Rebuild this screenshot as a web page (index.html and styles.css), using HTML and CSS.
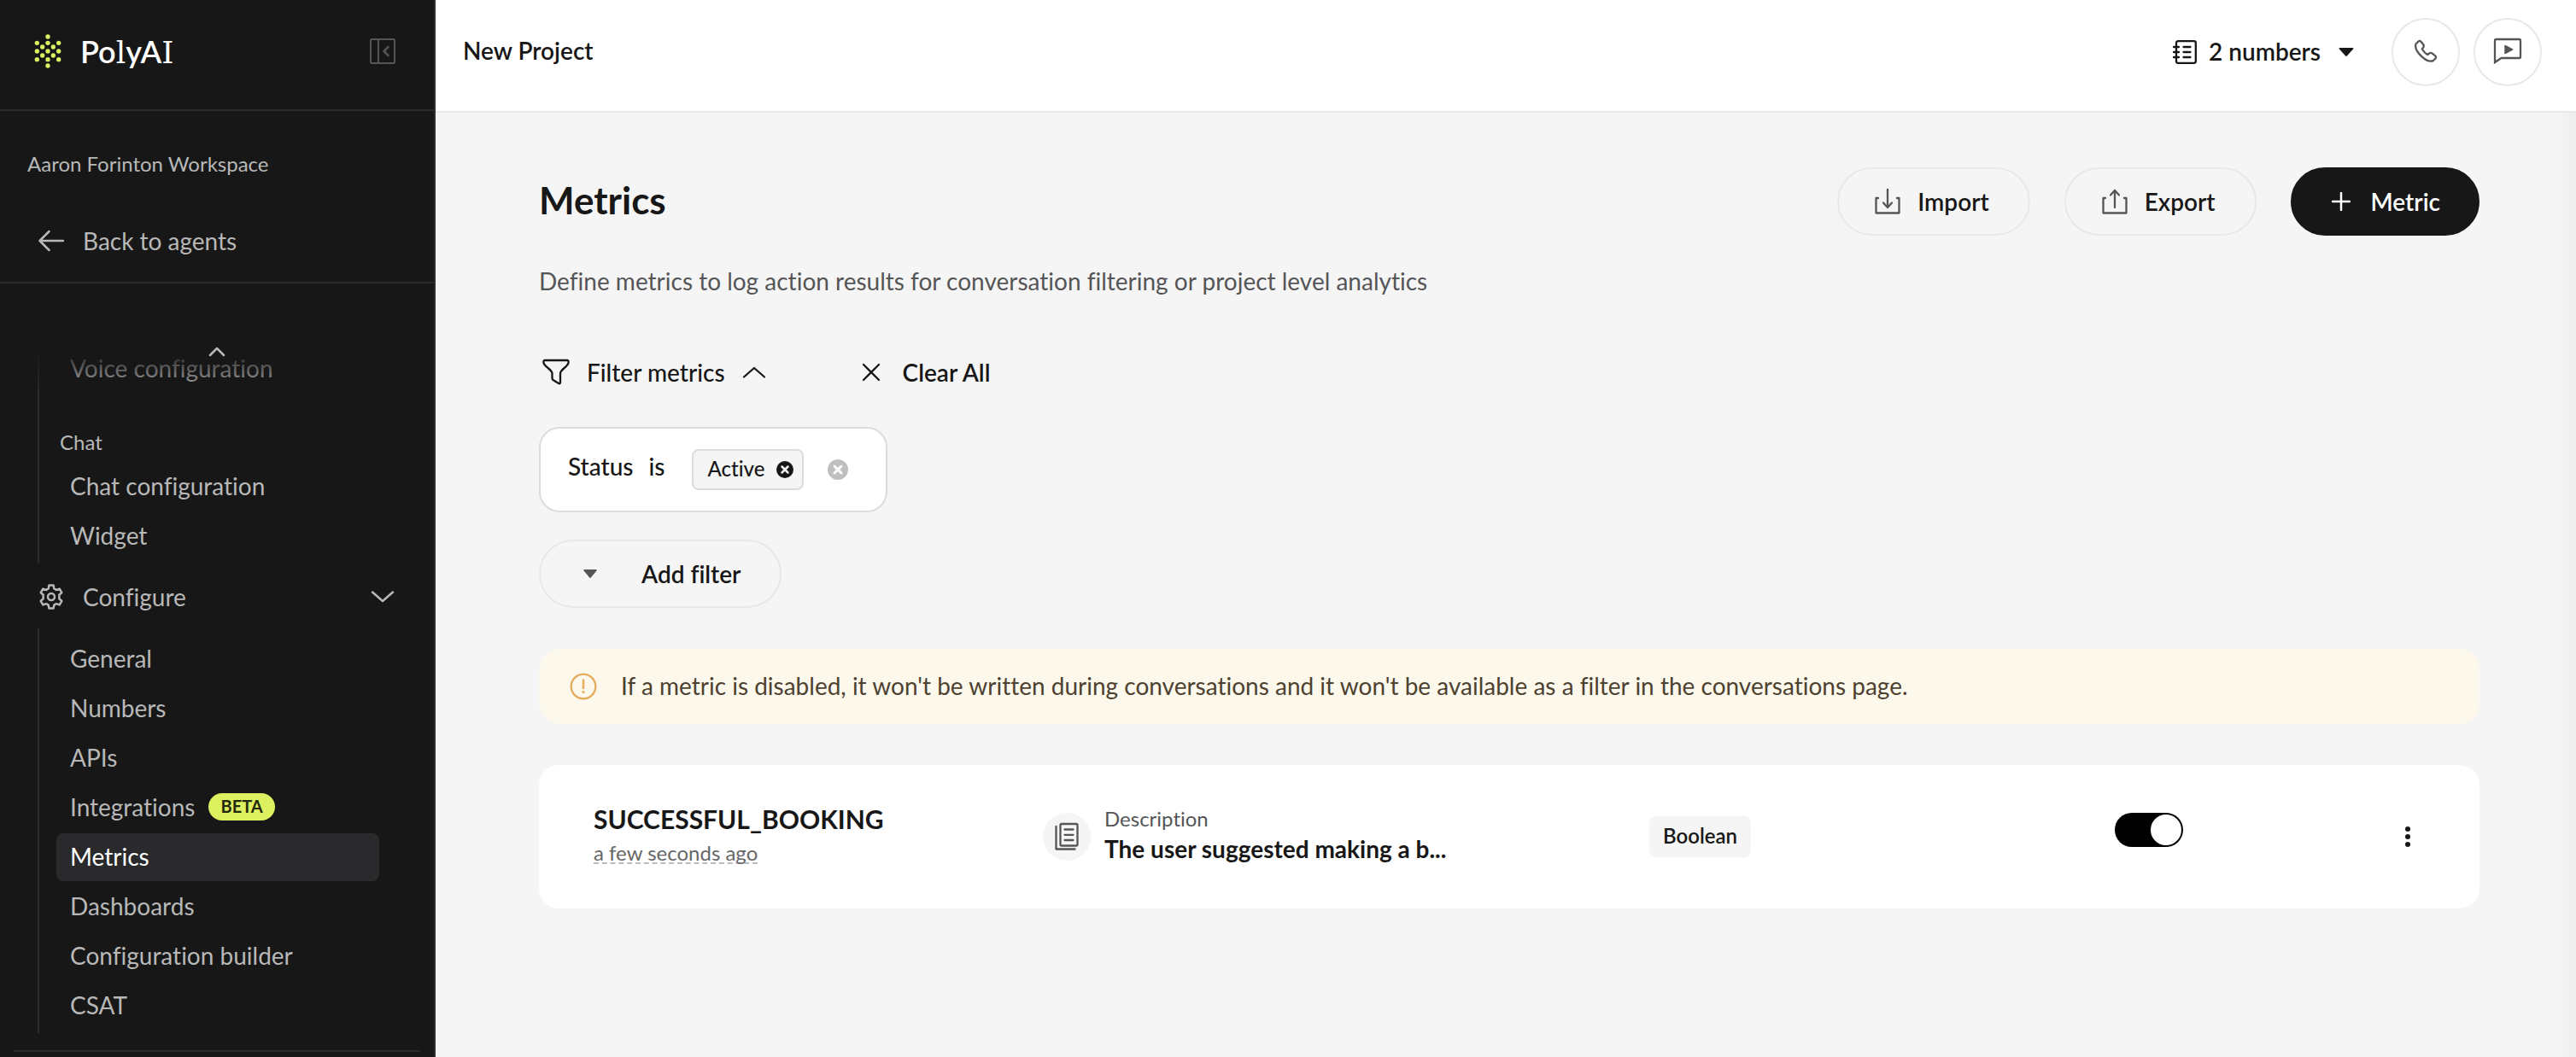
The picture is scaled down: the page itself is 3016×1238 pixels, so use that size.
FILE: index.html
```html
<!DOCTYPE html>
<html lang="en">
<head>
<meta charset="utf-8">
<meta name="viewport" content="width=device-width, initial-scale=1">
<title>Metrics - PolyAI</title>
<link rel="stylesheet" href="styles.css">
</head>
<body>
<div class="app">
  <aside class="sidebar">
    <div class="brand">
      <a class="brand-link" href="#">
        <svg class="brand-mark" width="32" height="42" viewBox="120 117 96 126" fill="currentColor" aria-hidden="true">
          <circle cx="130" cy="151" r="8"/><circle cx="130" cy="180" r="8"/><circle cx="130" cy="209" r="8"/>
          <circle cx="149" cy="165" r="8"/><circle cx="149" cy="195" r="8"/>
          <circle cx="168" cy="129" r="8"/><circle cx="168" cy="151" r="8"/><circle cx="168" cy="180" r="8"/><circle cx="168" cy="209" r="8"/><circle cx="168" cy="231" r="8"/>
          <circle cx="187" cy="165" r="8"/><circle cx="187" cy="195" r="8"/>
          <circle cx="206" cy="151" r="8"/><circle cx="206" cy="180" r="8"/><circle cx="206" cy="209" r="8"/>
        </svg>
        <span class="brand-name">Po<span class="slab">l</span>yA<span class="slab">I</span></span>
      </a>
      <button class="icon-button collapse" type="button" aria-label="Collapse sidebar">
        <svg width="30" height="30" viewBox="0 0 30 30" fill="none" stroke="currentColor" stroke-width="2" aria-hidden="true"><rect x="1" y="1" width="28" height="28" rx="1.5"/><path d="M10 1v28"/><path d="M21.500 10 16.500 15l5 5" stroke-width="2.500" stroke-linecap="round" stroke-linejoin="round"/></svg>
      </button>
    </div>
    <div class="workspace">
      <div class="workspace-name">Aaron Forinton Workspace</div>
      <a class="back" href="#">
        <svg width="30" height="30" viewBox="0 0 30 30" fill="none" stroke="currentColor" stroke-width="2.500" stroke-linecap="round" stroke-linejoin="round" aria-hidden="true"><path d="M29 15H1.500M12.500 4 1.500 15l11 11"/></svg>
        <span>Back to agents</span>
      </a>
    </div>
    <nav class="nav" aria-label="Project">
      <div class="scroll-fade">
        <svg width="20" height="12" viewBox="0 0 20 12" fill="none" stroke="currentColor" stroke-width="2.500" stroke-linecap="round" stroke-linejoin="round" aria-hidden="true"><path d="m2 10 8-8 8 8"/></svg>
      </div>
      <ul class="nav-group">
        <li><a class="nav-item" href="#">Voice configuration</a></li>
        <li class="nav-label">Chat</li>
        <li><a class="nav-item" href="#">Chat configuration</a></li>
        <li><a class="nav-item" href="#">Widget</a></li>
      </ul>
      <button class="nav-toggle" type="button" aria-expanded="true">
        <svg width="30" height="30" viewBox="0 0 30 30" fill="none" stroke="currentColor" stroke-width="2.500" stroke-linejoin="round" aria-hidden="true"><path d="M12.400 1.500h5.200l.7 3.900 2.600 1.500 3.800-1.300 2.600 4.500-3 2.700c.2 1.500.2 3 0 4.400l3 2.700-2.600 4.500-3.800-1.300-2.600 1.500-.7 3.900h-5.200l-.7-3.900-2.600-1.500-3.800 1.300-2.600-4.500 3-2.700c-.2-1.400-.2-2.900 0-4.400l-3-2.700 2.600-4.500 3.800 1.300 2.600-1.500z"/><circle cx="15" cy="15" r="4"/></svg>
        <span>Configure</span>
        <svg class="nav-chevron" width="28" height="14" viewBox="0 0 28 14" fill="none" stroke="currentColor" stroke-width="2.500" stroke-linecap="round" stroke-linejoin="round" aria-hidden="true"><path d="m2 1.500 12 10.500 12-10.500"/></svg>
      </button>
      <ul class="nav-group configure">
        <li><a class="nav-item" href="#">General</a></li>
        <li><a class="nav-item" href="#">Numbers</a></li>
        <li><a class="nav-item" href="#">APIs</a></li>
        <li><a class="nav-item" href="#">Integrations <span class="beta">BETA</span></a></li>
        <li><a class="nav-item active" href="#" aria-current="page">Metrics</a></li>
        <li><a class="nav-item" href="#">Dashboards</a></li>
        <li><a class="nav-item" href="#">Configuration builder</a></li>
        <li><a class="nav-item" href="#">CSAT</a></li>
      </ul>
      <hr class="nav-divider">
    </nav>
  </aside>

  <div class="main">
    <header class="topbar">
      <div class="project">New Project</div>
      <div class="topbar-actions">
        <label class="numbers">
          <svg width="28" height="28" viewBox="0 0 28 28" fill="none" stroke="currentColor" stroke-width="2.300" aria-hidden="true"><rect x="4" y="1.200" width="22.800" height="25.600" rx="2"/><path d="M1 8h6M1 14h6M1 20h6M12.500 8H20.500M12.500 14H20.500M12.500 20H20.500" stroke-linecap="round"/></svg>
          <select class="numbers-select" aria-label="Phone numbers"><option>2 numbers</option></select>
          <svg class="numbers-caret" width="18" height="10" viewBox="0 0 18 10" fill="currentColor" aria-hidden="true"><path d="M1.500 0h15q1.500.2.6 1.500l-7.300 8q-.8.800-1.600 0l-7.300-8Q0 .2 1.500 0z"/></svg>
        </label>
        <div class="rounds">
          <button class="round" type="button" aria-label="Call">
            <svg width="28" height="28" viewBox="0 0 28 28" fill="none" stroke="currentColor" stroke-width="2.300" stroke-linejoin="round" aria-hidden="true"><path d="M2.500 5.500 5.500 2.500q1.500-1.300 3 .2l2.800 3.600q1 1.500 0 3l-1.500 2.200q2.500 4.200 6.300 6.500l2.300-1.600q1.500-1 3 0l3.800 2.900q1.500 1.500.2 3.200l-2.700 2.700c-3.500 1.300-8.800-.8-13.400-5.100C4.300 15.400 1.200 9.600 2.500 5.500z"/></svg>
          </button>
          <button class="round" type="button" aria-label="Chat preview">
            <svg width="34" height="32" viewBox="0 0 34 32" fill="none" stroke="currentColor" stroke-width="2.300" aria-hidden="true"><path d="M2 29V3.500Q2 2 3.500 2h27Q32 2 32 3.500v19q0 1.500-1.500 1.500H9.500z"/><path d="M14 9.500v9l8.500-4.500z" fill="currentColor" stroke-width="1.500" stroke-linejoin="round"/></svg>
          </button>
        </div>
      </div>
    </header>

    <main class="content">
      <div class="page-head">
        <h1>Metrics</h1>
        <div class="page-actions">
          <button class="pill" type="button">
            <svg width="30" height="32" viewBox="0 0 30 32" fill="none" stroke="currentColor" stroke-width="2.300" stroke-linecap="round" stroke-linejoin="round" aria-hidden="true"><path d="M4 12H1.500v17.500h27V12H26M15 2v21M10 17.500l5 5.500 5-5.500"/></svg>
            <span>Import</span>
          </button>
          <button class="pill" type="button">
            <svg width="30" height="32" viewBox="0 0 30 32" fill="none" stroke="currentColor" stroke-width="2.300" stroke-linecap="round" stroke-linejoin="round" aria-hidden="true"><path d="M4 12H1.500v17.500h27V12H26M15 23V3M10 8.500 15 3l5 5.500"/></svg>
            <span>Export</span>
          </button>
          <button class="pill primary" type="button">
            <svg width="22" height="22" viewBox="0 0 22 22" fill="none" stroke="currentColor" stroke-width="2.500" stroke-linecap="round" aria-hidden="true"><path d="M11 1v20M1 11h20"/></svg>
            <span>Metric</span>
          </button>
        </div>
      </div>
      <p class="intro">Define metrics to log action results for conversation filtering or project level analytics</p>

      <div class="filter-bar">
        <button class="text-button filter-toggle" type="button" aria-expanded="true">
          <svg width="32" height="32" viewBox="0 0 32 32" fill="none" stroke="currentColor" stroke-width="2.300" stroke-linejoin="round" aria-hidden="true"><path d="M2.500 2h27q1.500.3 1 3c-1 5-9.500 7.500-9.500 12.500v10.500q-.3 2-2 1L12.500 25q-1-.8-1-2v-5.500C11.500 12.500 2.500 10 1.500 5q-.5-2.700 1-3z"/></svg>
          <span>Filter metrics</span>
          <svg width="28" height="14" viewBox="0 0 28 14" fill="none" stroke="currentColor" stroke-width="2.300" stroke-linecap="round" stroke-linejoin="round" aria-hidden="true"><path d="M2 12.500 14 2l12 10.500"/></svg>
        </button>
        <button class="text-button clear-all" type="button">
          <svg width="22" height="22" viewBox="0 0 22 22" fill="none" stroke="currentColor" stroke-width="2.300" stroke-linecap="round" aria-hidden="true"><path d="m2 2 18 18M20 2 2 20"/></svg>
          <span>Clear All</span>
        </button>
      </div>

      <div class="filter-card">
        <span class="filter-field">Status</span>
        <span class="filter-op">is</span>
        <span class="tag">
          <span class="tag-text">Active</span>
          <button class="icon-button" type="button" aria-label="Remove Active">
            <svg width="20" height="20" viewBox="0 0 20 20" aria-hidden="true"><circle cx="10" cy="10" r="10" fill="#171717"/><path d="m6.500 6.500 7 7m0-7-7 7" stroke="#f5f5f5" stroke-width="2.500" stroke-linecap="round"/></svg>
          </button>
        </span>
        <button class="icon-button clear-filter" type="button" aria-label="Remove status filter">
          <svg width="24" height="24" viewBox="0 0 24 24" aria-hidden="true"><circle cx="12" cy="12" r="12" fill="#bfbfbf"/><path d="m8 8 8 8m0-8-8 8" stroke="#fff" stroke-width="3" stroke-linecap="round"/></svg>
        </button>
      </div>

      <button class="pill add-filter" type="button" aria-haspopup="menu">
        <svg width="16" height="10" viewBox="0 0 16 10" fill="currentColor" aria-hidden="true"><path d="M1.200 0h13.600q1.600.2.600 1.500L8.800 9.500q-.8.800-1.600 0L.6 1.500Q-.4.2 1.200 0z"/></svg>
        <span>Add filter</span>
      </button>

      <div class="notice" role="note">
        <svg width="32" height="32" viewBox="0 0 32 32" fill="none" stroke="currentColor" stroke-width="2.300" aria-hidden="true"><circle cx="16" cy="16" r="14.300"/><path d="M16 8.500v9.500" stroke-width="2.500" stroke-linecap="round"/><circle cx="16" cy="22.500" r="1.500" fill="currentColor" stroke="none"/></svg>
        <span class="notice-text">If a metric is disabled, it won't be written during conversations and it won't be available as a filter in the conversations page.</span>
      </div>

      <ul class="metrics">
        <li class="metric">
          <div class="metric-name">
            <h2>SUCCESSFUL_BOOKING</h2>
            <div><time class="updated">a few seconds ago</time></div>
          </div>
          <div class="metric-description">
            <span class="badge-icon">
              <svg width="28" height="34" viewBox="0 0 28 34" fill="none" stroke="currentColor" stroke-width="2.300" stroke-linejoin="round" aria-hidden="true"><rect x="6.500" y="2" width="20" height="25.500" rx="1.500"/><path d="M1.500 5v26.500h22M11.500 8.500h10M11.500 14.800h10M11.500 21h10" stroke-linecap="round"/></svg>
            </span>
            <div class="description-text">
              <div class="description-label">Description</div>
              <div class="description-value">The user suggested making a b...</div>
            </div>
          </div>
          <div><span class="type">Boolean</span></div>
          <div class="metric-toggle"><input class="switch" type="checkbox" aria-label="Enable SUCCESSFUL_BOOKING" checked></div>
          <div class="metric-menu">
            <button class="icon-button more" type="button" aria-label="More actions">
              <svg width="6" height="24" viewBox="0 0 6 24" fill="currentColor" aria-hidden="true"><circle cx="3" cy="3" r="3"/><circle cx="3" cy="12" r="3"/><circle cx="3" cy="21" r="3"/></svg>
            </button>
          </div>
        </li>
      </ul>
    </main>
  </div>
</div>
</body>
</html>
```
FILE: styles.css
```css
* {
  box-sizing: border-box;
}

body {
  margin: 0;
  background: #f5f5f5;
  color: #171717;
  font: 400 28px/38px Lato, "Liberation Sans", sans-serif;
  font-variant-ligatures: none;
}

button,
select {
  margin: 0;
  padding: 0;
  border: 0;
  background: none;
  color: inherit;
  font: inherit;
  cursor: pointer;
}

a {
  color: inherit;
  text-decoration: none;
}

ul {
  margin: 0;
  padding: 0;
  list-style: none;
}

svg {
  display: block;
  flex: none;
}

.app {
  display: flex;
  min-height: 100vh;
}

.icon-button {
  display: flex;
  align-items: center;
  justify-content: center;
}

/* Sidebar */

.sidebar {
  flex: none;
  width: 510px;
  border-right: 2px solid #2f2f2f;
  background: #171717;
  color: #b8b8b8;
}

.brand {
  display: flex;
  align-items: center;
  justify-content: space-between;
  height: 130px;
  padding: 0 45px 8px 40px;
  border-bottom: 2px solid #2b2b2b;
}

.brand-link {
  display: flex;
  align-items: center;
  gap: 22px;
}

.brand-mark {
  color: #dcf060;
}

.brand-name {
  color: #fff;
  font-size: 36px;
  font-weight: 600;
  line-height: 44px;
}

.slab {
  font-family: "DejaVu Serif", serif;
  font-weight: 400;
  line-height: 1;
}

.collapse {
  color: #555557;
}

.workspace {
  padding: 46px 32px 24px;
  border-bottom: 2px solid #2b2b2b;
}

.workspace-name {
  font-size: 24px;
  line-height: 32px;
}

.back {
  display: flex;
  align-items: center;
  gap: 22px;
  height: 48px;
  margin-top: 50px;
  padding-left: 13px;
}

.nav {
  position: relative;
  padding-top: 72px;
}

.scroll-fade {
  position: absolute;
  top: 72px;
  left: 0;
  right: 0;
  height: 56px;
  padding: 2px 0 0 244px;
  background: linear-gradient(#171717 10%, rgba(23, 23, 23, 0));
}

.nav-group {
  display: flex;
  flex-direction: column;
  gap: 2px;
  margin-left: 44px;
  padding-bottom: 4px;
  border-left: 2px solid #2b2b2b;
}

.configure {
  padding-top: 8px;
}

.nav-item {
  display: flex;
  align-items: center;
  gap: 16px;
  height: 56px;
  margin: 0 64px 0 20px;
  padding: 0 16px 2px;
  border-radius: 8px;
}

.nav-item.active {
  background: #2a2a2c;
  color: #fff;
}

.nav-label {
  height: 78px;
  padding: 40px 24px 0;
  font-size: 24px;
  line-height: 32px;
}

.nav-toggle {
  display: flex;
  align-items: center;
  gap: 22px;
  width: 100%;
  height: 76px;
  padding: 2px 46px 0 45px;
}

.nav-chevron {
  margin-left: auto;
}

.beta {
  height: 32px;
  padding: 0 14px;
  border-radius: 16px;
  background: #dcf060;
  color: #24280c;
  font-size: 20px;
  font-weight: 700;
  line-height: 30px;
}

.nav-divider {
  height: 2px;
  margin: 20px 16px 0;
  border: 0;
  background: #2b2b2b;
}

/* Top bar */

.main {
  flex: 1;
  min-width: 0;
  display: flex;
  flex-direction: column;
}

.topbar {
  display: flex;
  align-items: center;
  justify-content: space-between;
  height: 132px;
  padding: 0 40px 8px 32px;
  border-bottom: 2px solid #e8e8e8;
  background: #fff;
}

.project {
  padding-bottom: 4px;
  font-weight: 600;
}

.topbar-actions,
.rounds {
  display: flex;
  align-items: center;
}

.topbar-actions {
  gap: 44px;
}

.rounds {
  gap: 16px;
}

.round svg {
  margin-bottom: 2px;
}

.numbers {
  display: flex;
  align-items: center;
  gap: 14px;
  font-weight: 600;
}

.numbers-select {
  padding-bottom: 2px;
  appearance: none;
}

.numbers-caret {
  margin-left: 6px;
}

.round {
  display: flex;
  align-items: center;
  justify-content: center;
  width: 80px;
  height: 80px;
  border: 2px solid #e8e8e8;
  border-radius: 50%;
  color: #555557;
}

/* Page */

.content {
  flex: 1;
  padding: 64px 113px 64px 121px;
  background: linear-gradient(to left, #efefef 8px, #f3f3f3 8px 16px, #f5f5f5 16px);
}

.page-head {
  display: flex;
  align-items: center;
  justify-content: space-between;
}

h1 {
  margin: 0;
  padding-bottom: 4px;
  font-size: 44px;
  font-weight: 700;
  line-height: 56px;
}

.page-actions {
  display: flex;
  gap: 40px;
}

.pill {
  display: flex;
  align-items: center;
  gap: 20px;
  height: 80px;
  padding: 0 46px 0 42px;
  border: 2px solid #e8e8e8;
  border-radius: 40px;
  font-weight: 600;
}

.pill svg {
  color: #555557;
}

.pill.primary {
  gap: 24px;
  padding: 0 44px 0 46px;
  border-color: #171717;
  background: #171717;
  color: #fff;
}

.pill.primary svg {
  color: #fff;
}

.intro {
  margin: 34px 0 0;
  color: #555557;
}

.filter-bar {
  display: flex;
  gap: 112px;
  margin-top: 68px;
  padding-left: 4px;
}

.text-button {
  display: flex;
  align-items: center;
  height: 40px;
  font-weight: 500;
}

.filter-toggle {
  gap: 20px;
}

.clear-all {
  gap: 26px;
  font-weight: 600;
}

.filter-card {
  display: flex;
  align-items: center;
  width: fit-content;
  height: 100px;
  margin-top: 44px;
  padding: 0 44px 0 32px;
  border: 2px solid #dcdcdc;
  border-radius: 24px;
  background: #fff;
  font-weight: 500;
}

.filter-field,
.filter-op {
  padding-bottom: 8px;
}

.filter-op {
  margin: 0 32px 0 18px;
}

.tag {
  display: flex;
  align-items: center;
  gap: 14px;
  height: 48px;
  padding: 0 10px 0 16px;
  border: 2px solid #dcdcdc;
  border-radius: 8px;
  background: #f5f5f5;
  font-size: 24px;
}

.tag-text {
  padding-bottom: 2px;
}

.clear-filter {
  margin-left: 28px;
}

.add-filter {
  gap: 52px;
  margin-top: 32px;
  padding: 0 46px 0 50px;
}

.notice {
  display: flex;
  align-items: center;
  gap: 28px;
  min-height: 88px;
  margin-top: 48px;
  padding: 0 36px;
  border-radius: 24px;
  background: #fdf8ec;
  color: #4d4130;
}

.notice svg {
  color: #e6ac5c;
}

.notice-text {
  padding-bottom: 2px;
}

.metrics {
  margin-top: 48px;
}

.metric {
  display: grid;
  grid-template-columns: 526fr 710fr 545fr 323fr 40px;
  align-items: center;
  min-height: 168px;
  padding: 0 64px;
  border-radius: 24px;
  background: #fff;
}

.metric-name {
  padding-bottom: 4px;
}

h2 {
  margin: 0;
  font-size: 30px;
  font-weight: 700;
  line-height: 38px;
}

.updated {
  color: #666;
  font-size: 24px;
  line-height: 32px;
  text-decoration: underline dashed #bbb 2px;
  text-decoration-skip-ink: none;
  text-underline-offset: 2px;
}

.metric-description {
  display: flex;
  align-items: center;
  gap: 16px;
}

.badge-icon {
  display: flex;
  flex: none;
  align-items: center;
  justify-content: center;
  width: 56px;
  height: 56px;
  border-radius: 50%;
  background: #f5f5f5;
  color: #555557;
}

.description-text {
  padding-bottom: 4px;
}

.description-label {
  color: #555557;
  font-size: 24px;
  line-height: 32px;
}

.description-value {
  font-weight: 700;
}

.type {
  display: inline-flex;
  align-items: center;
  height: 48px;
  padding: 0 16px 2px;
  border-radius: 8px;
  background: #f5f5f5;
  font-size: 24px;
  font-weight: 600;
}

.metric-toggle {
  padding-bottom: 16px;
}

.switch {
  display: flex;
  justify-content: flex-end;
  appearance: none;
  width: 80px;
  height: 40px;
  margin: 0;
  padding: 2px;
  border-radius: 20px;
  background: #000;
  cursor: pointer;
}

.switch::before {
  width: 36px;
  height: 36px;
  border-radius: 50%;
  background: #fff;
  content: "";
}

.switch:not(:checked) {
  justify-content: flex-start;
  background: #bbb;
}

.more {
  width: 40px;
  height: 40px;
}
```
